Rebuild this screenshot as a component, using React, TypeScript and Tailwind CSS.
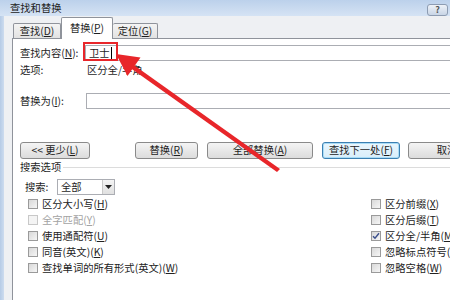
import React from 'react'

const font = { fontFamily: '"Noto Sans CJK SC", "Liberation Sans", sans-serif' }

// underlined access key, e.g. (N)
function Key({ k }: { k: string }) {
  return (
    <span>
      (<span className="underline underline-offset-[1px]">{k}</span>)
    </span>
  )
}

function Btn({ w, children, focus }: { w: string; children: React.ReactNode; focus?: boolean }) {
  return (
    <div
      className={`${w} h-[17px] shrink-0 flex items-center justify-center rounded-[3px] border text-[10.3px] leading-none ${
        focus
          ? 'border-[#3c7fb1] bg-gradient-to-b from-[#eaf6fd] to-[#d9eefa] shadow-[inset_0_0_0_1px_#a9dcf6]'
          : 'border-[#8a8a8a] bg-gradient-to-b from-[#f4f4f4] to-[#dcdcdc]'
      }`}
    >
      {children}
    </div>
  )
}

function Check({ label, checked, disabled }: { label: React.ReactNode; checked?: boolean; disabled?: boolean }) {
  return (
    <div className="h-[16px] flex items-center gap-[4px]">
      <div
        className={`w-[10px] h-[10px] shrink-0 border flex items-center justify-center ${
          disabled ? 'border-[#c8c8c8] bg-[#f4f4f4]' : 'border-[#9a9a9a] bg-gradient-to-br from-[#d8d8d8] to-[#f6f6f6]'
        }`}
      >
        {checked && (
          <svg width="8" height="8" viewBox="0 0 8 8">
            <path d="M1 4.2 L3 6.3 L7 1.2" fill="none" stroke="#3b4f8c" strokeWidth="1.4" />
          </svg>
        )}
      </div>
      <span className={`text-[10.3px] leading-none whitespace-nowrap ${disabled ? 'text-[#a3a3a3]' : 'text-[#222]'}`}>{label}</span>
    </div>
  )
}

export default function App() {
  return (
    <div className="relative w-[450px] h-[300px] overflow-hidden flex flex-col bg-[#f0f0f0] text-[#1e1e1e]" style={font}>
      {/* Title bar */}
      <div className="h-[16px] shrink-0 flex items-center justify-between pl-[10px] pr-[2px] bg-gradient-to-b from-[#bcd1eb] to-[#d5e3f4]">
        <span className="text-[10.3px] leading-none text-[#222]">查找和替换</span>
        <div className="mt-[3px] w-[21px] h-[12px] rounded-[3px] border border-[#8d9cb2] bg-gradient-to-b from-[#eef2f8] to-[#c8d5e6] flex items-center justify-center text-[9px] leading-none text-[#555] font-bold">
          ?
        </div>
      </div>

      <div className="flex-1 flex min-w-0">
        {/* window frame */}
        <div className="w-[4px] shrink-0 bg-gradient-to-r from-[#b5cbe6] to-[#cddcef]" />
        <div className="flex-1 min-w-0 flex flex-col pl-[8px] bg-[#eef0f3]">
          {/* Tabs */}
          <div className="h-[22px] shrink-0 flex items-end pl-[1px]">
            <div className="w-[48px] h-[15px] border border-b-0 border-[#8f939b] rounded-t-[2px] bg-gradient-to-b from-[#f4f4f4] to-[#e2e2e2] flex items-center justify-center text-[10.3px] leading-none">
              查找<Key k="D" />
            </div>
            <div className="relative z-10 -mb-px w-[52px] h-[22px] border border-b-0 border-[#8f939b] rounded-t-[2px] bg-white flex items-center justify-center text-[10.3px] leading-none">
              替换<Key k="P" />
            </div>
            <div className="w-[45px] h-[15px] border border-b-0 border-l-0 border-[#8f939b] rounded-t-[2px] bg-gradient-to-b from-[#f4f4f4] to-[#e2e2e2] flex items-center justify-center text-[10.3px] leading-none">
              定位<Key k="G" />
            </div>
          </div>

          {/* Panel */}
          <div className="flex-1 min-w-0 overflow-hidden bg-white border-l border-t border-[#8f939b] pl-[7px] pt-[6px] text-[10.3px] leading-none">
            <div className="h-[16px] flex items-center">
              <span className="w-[65px] shrink-0">
                查找内容<Key k="N" />:
              </span>
              <div className="flex-1 -mr-[20px] h-[16px] border border-[#abadb3] flex items-center pl-[3px]">
                <span>卫士</span>
                <span className="ml-[1px] w-px h-[12px] bg-black" />
              </div>
            </div>

            <div className="h-[14px] mt-[2px] flex items-center">
              <span className="w-[67px] shrink-0">选项:</span>
              <span>区分全/半角</span>
            </div>

            <div className="h-[16px] mt-[16px] flex items-center">
              <span className="w-[66px] shrink-0">
                替换为<Key k="I" />:
              </span>
              <div className="flex-1 -mr-[20px] h-[16px] border border-[#abadb3]" />
            </div>

            <div className="h-[17px] mt-[33px] flex items-center">
              <Btn w="w-[70px]">
                &lt;&lt; 更少<Key k="L" />
              </Btn>
              <div className="w-[45px] shrink-0" />
              <Btn w="w-[63px]">
                替换<Key k="R" />
              </Btn>
              <div className="w-[9px] shrink-0" />
              <Btn w="w-[106px]">
                全部替换<Key k="A" />
              </Btn>
              <div className="w-[9px] shrink-0" />
              <Btn w="w-[78px]" focus>
                查找下一处<Key k="F" />
              </Btn>
              <div className="w-[8px] shrink-0" />
              <Btn w="w-[78px]">取消</Btn>
            </div>

            <div className="h-[14px] mt-[1px] flex items-center">
              <span>搜索选项</span>
              <div className="flex-1 ml-[2px] h-px bg-[#dcdcdc]" />
            </div>

            <div className="h-[16px] mt-[5px] flex items-center pl-[5px]">
              <span className="w-[32px] shrink-0">搜索:</span>
              <div className="w-[58px] h-[16px] border border-[#abadb3] flex items-center">
                <span className="flex-1 pl-[3px]">全部</span>
                <div className="w-[12px] h-[14px] border-l border-[#c9c9c9] bg-gradient-to-b from-[#f4f4f4] to-[#e0e0e0] flex items-center justify-center">
                  <svg width="7" height="4" viewBox="0 0 7 4">
                    <path d="M0 0 H7 L3.5 4 Z" fill="#222" />
                  </svg>
                </div>
              </div>
            </div>

            <div className="mt-[1px] flex">
              <div className="w-[351px] shrink-0 pl-[8px] flex flex-col">
                <Check label={<>区分大小写<Key k="H" /></>} />
                <Check label={<>全字匹配<Key k="Y" /></>} disabled />
                <Check label={<>使用通配符<Key k="U" /></>} />
                <Check label={<>同音(英文)<Key k="K" /></>} />
                <Check label={<>查找单词的所有形式(英文)<Key k="W" /></>} />
              </div>
              <div className="flex flex-col">
                <Check label={<>区分前缀<Key k="X" /></>} />
                <Check label={<>区分后缀<Key k="T" /></>} />
                <Check label={<>区分全/半角<Key k="M" /></>} checked />
                <Check label={<>忽略标点符号<Key k="S" /></>} />
                <Check label={<>忽略空格<Key k="W" /></>} />
              </div>
            </div>
          </div>
        </div>
      </div>

      {/* red annotation overlay */}
      <svg className="absolute inset-0 pointer-events-none" width="450" height="300" viewBox="0 0 450 300">
        <rect x="84" y="43" width="33" height="17" fill="none" stroke="#e8262a" strokeWidth="2" />
        <polygon points="131,63 280,169 277,172 129,67" fill="#e8262a" />
        <polygon points="116,54 140.5,57.5 127.5,76" fill="#e8262a" />
      </svg>
    </div>
  )
}
